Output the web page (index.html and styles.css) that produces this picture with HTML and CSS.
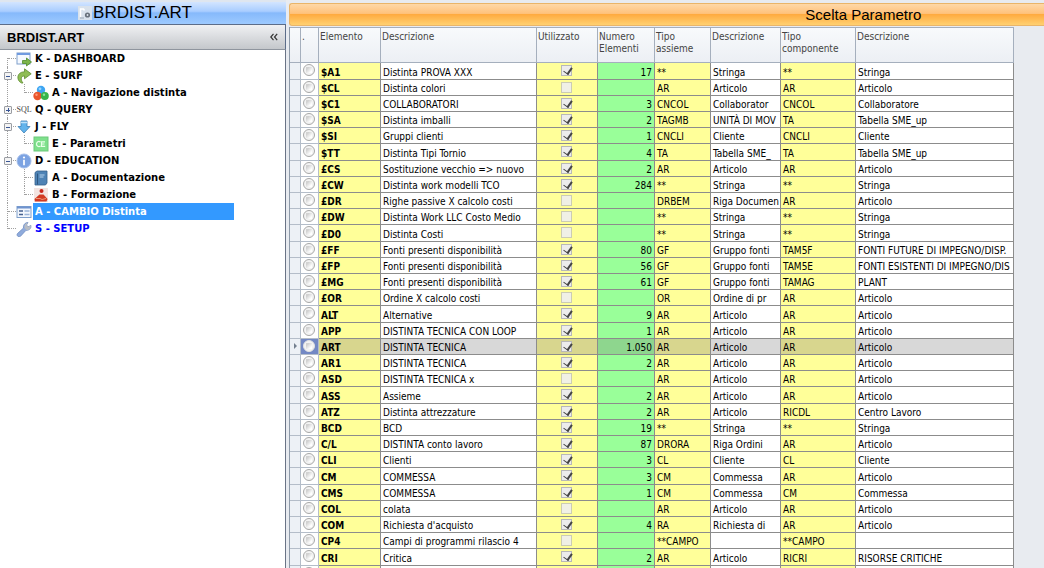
FILE: index.html
```html
<!DOCTYPE html>
<html lang="it">
<head>
<meta charset="utf-8">
<title>BRDIST.ART</title>
<link rel="stylesheet" href="styles.css">
</head>
<body>
<div class="app">
  <aside class="side">
    <h1 class="side-title">
      <svg class="title-icon" viewBox="0 0 14 14" aria-hidden="true"><rect width="14" height="14" fill="#d9e2ec"/><path d="M2.500 11V3h3l1 1.500" fill="none" stroke="#fff" stroke-width="1.500"/><circle cx="9.500" cy="9" r="2.600" fill="#68717c"/><circle cx="9.500" cy="9" r=".9" fill="#dfe6ee"/><path d="M2 12h4" stroke="#9aa6b4"/></svg>
      <span>BRDIST.ART</span>
    </h1>
    <div class="side-bar">
      <h2 class="side-heading">BRDIST.ART</h2>
      <button class="collapse" type="button" aria-label="Comprimi"><svg class="chevrons" viewBox="0 0 8 8" aria-hidden="true"><path d="M3.500 .8L.8 4l2.700 3.200M7.200 .8L4.500 4l2.700 3.200" fill="none" stroke="#333" stroke-width="1.200"/></svg></button>
    </div>
    <nav class="tree">
      <ul class="branch root">
        <li class="node"><div class="row"><span class="slot"></span>
          <svg class="icon" viewBox="0 0 16 16"><rect x="1" y="2" width="13" height="11" fill="#f5f9ff" stroke="#7f9fcb"/><path d="M1 3h13" stroke="#6f9ae0" stroke-width="2"/><path d="M6.500 9.500h4V7l5 4-5 4v-2.500h-4z" fill="#7db54b" stroke="#4f8a2a" stroke-width=".8"/></svg>
          <a class="label" href="#dashboard">K - DASHBOARD</a></div></li>
        <li class="node"><div class="row"><span class="slot"><button class="toggle" type="button" aria-label="Comprimi SURF"></button></span>
          <svg class="icon" viewBox="0 0 16 16"><path d="M5.500 15C0 12.500 .5 3.800 8.500 3.800V.8l6.700 5-6.700 5V8C5 8 4 11 7 15z" fill="#8fbd55" stroke="#5e8d31" stroke-width=".8"/></svg>
          <a class="label" href="#surf">E - SURF</a></div>
          <ul class="branch"><li class="node"><div class="row"><span class="slot"></span>
            <svg class="icon" viewBox="0 0 16 16"><circle cx="8" cy="5" r="4.200" fill="#3da5f2"/><circle cx="4.500" cy="11" r="4.200" fill="#e9562c"/><circle cx="11.800" cy="11" r="4" fill="#35b54a"/><circle cx="7" cy="3.800" r="1.400" fill="#9ad6ff"/><circle cx="3.500" cy="9.800" r="1.200" fill="#ff9a78"/><circle cx="11" cy="9.800" r="1.200" fill="#8be39a"/></svg>
            <a class="label" href="#navigazione">A - Navigazione distinta</a></div></li></ul></li>
        <li class="node"><div class="row"><span class="slot"><button class="toggle closed" type="button" aria-label="Espandi QUERY"></button></span>
          <span class="icon sql"><span>SQL</span></span>
          <a class="label" href="#query">Q - QUERY</a></div></li>
        <li class="node"><div class="row"><span class="slot"><button class="toggle" type="button" aria-label="Comprimi FLY"></button></span>
          <svg class="icon" viewBox="0 0 16 16"><path d="M5 2h6v5.500h3L8 14 2 7.500h3z" fill="#62b4ec" stroke="#3c7fb5" stroke-width=".8"/><path d="M5 3.500h6" stroke="#bfe2fa" stroke-width="1.500"/></svg>
          <a class="label" href="#fly">J - FLY</a></div>
          <ul class="branch"><li class="node"><div class="row"><span class="slot"></span>
            <svg class="icon" viewBox="0 0 16 16"><rect x="1" y="1" width="14" height="14" fill="#7fe08c" stroke="#6cc97a"/><path d="M7.500 6C5.500 4.500 3.500 6 3.500 8s2 3.500 4 2M12 5.800H8.500v4.600H12.200M8.500 8h3" fill="none" stroke="#e9ffe9" stroke-width="1.200"/></svg>
            <a class="label" href="#parametri">E - Parametri</a></div></li></ul></li>
        <li class="node"><div class="row"><span class="slot"><button class="toggle" type="button" aria-label="Comprimi EDUCATION"></button></span>
          <svg class="icon" viewBox="0 0 16 16"><circle cx="8" cy="8" r="7" fill="#7ca3e2" stroke="#a3bdea"/><circle cx="8" cy="4.500" r="1.100" fill="#fff"/><path d="M8 6.800v5.400" stroke="#fff" stroke-width="1.700"/></svg>
          <a class="label" href="#education">D - EDUCATION</a></div>
          <ul class="branch">
            <li class="node"><div class="row"><span class="slot"></span>
            <svg class="icon" viewBox="0 0 16 16"><path d="M2 2.500L4 1h10v12l-1.500 2H2z" fill="#4f83b5" stroke="#355f8c" stroke-width=".8"/><path d="M4.500 3.500v11" stroke="#2e5780"/><path d="M6.500 5h5M6.500 7h4" stroke="#b9d4ec"/></svg>
            <a class="label" href="#documentazione">A - Documentazione</a></div></li>
            <li class="node"><div class="row"><span class="slot"></span>
            <svg class="icon" viewBox="0 0 16 16"><rect x="1" y="1" width="14" height="14" fill="#f3e4e1"/><circle cx="8.500" cy="4" r="2" fill="#c9281d"/><path d="M1.500 12l5-4.500h4l4 4.500-1 2.500H2z" fill="#d23a22"/><path d="M3 11.500h4l2 1 4-1" fill="none" stroke="#f2a888" stroke-width=".8"/></svg>
            <a class="label" href="#formazione">B - Formazione</a></div></li>
          </ul></li>
        <li class="node"><div class="row"><span class="slot"></span>
          <svg class="icon" viewBox="0 0 16 16"><rect x="1" y="2.500" width="14" height="11" fill="#f3f7fd" stroke="#7f9fcb"/><path d="M1 3.500h14" stroke="#6f93cf" stroke-width="2"/><path d="M3 7h4M3 10.500h4" stroke="#45608f" stroke-width="1.500"/><path d="M8.500 7h5M8.500 10.500h5" stroke="#9bb4d8" stroke-width="1.500"/></svg>
          <a class="label selected" href="#cambio" aria-current="page">A - CAMBIO Distinta</a></div></li>
        <li class="node"><div class="row"><span class="slot"></span>
          <svg class="icon" viewBox="0 0 16 16"><path d="M1.500 12.500l6-5.500c-.5-3 1.500-5.500 4.500-5.500L10.500 4 12 5.800 15 4.500c.3 3-2 5.200-5 4.800l-5.500 6c-2 1.500-4.500-1-3-2.800z" fill="#8fabdc" stroke="#6484bb" stroke-width=".7"/><path d="M8.500 7C8 4 9.500 2 12 1.500L10.500 4 12 5.800 15 4.500c0 3-2 5-4.500 4.500z" fill="#b9bdc4"/></svg>
          <a class="label link" href="#setup">S - SETUP</a></div></li>
      </ul>
    </nav>
  </aside>
  <main class="content">
    <h2 class="content-title">Scelta Parametro</h2>
    <table class="grid">
      <colgroup><col class="c-mark"><col class="c-pick"><col class="c-elem"><col class="c-desc"><col class="c-used"><col class="c-num"><col class="c-type"><col class="c-tdesc"><col class="c-comp"><col class="c-cdesc"></colgroup>
      <thead><tr><th></th><th>.</th><th>Elemento</th><th>Descrizione</th><th>Utilizzato</th><th>Numero Elementi</th><th>Tipo assieme</th><th>Descrizione</th><th>Tipo componente</th><th>Descrizione</th></tr></thead>
      <tbody id="rows"></tbody>
    </table>
  </main>
</div>
<script src="grid.js"></script>
</body>
</html>
```

FILE: styles.css
```css
* { box-sizing: border-box; }

body {
  margin: 0;
  background: #e8ebf0;
  color: #000;
  font-family: "DejaVu Sans Condensed", "DejaVu Sans", sans-serif;
  font-size: 10px;
}

h1, h2, ul { margin: 0; padding: 0; }
button { padding: 0; border: 0; background: none; font: inherit; color: inherit; }

.app { display: flex; gap: 3px; height: 100vh; overflow: hidden; }

/* Left panel */
.side {
  flex: 0 0 286px;
  display: flex;
  flex-direction: column;
  background: #fff;
}
.side-title {
  display: flex;
  align-items: center;
  justify-content: center;
  gap: 1px;
  height: 24px;
  padding-right: 16px;
  border-top: 2px solid #dfe6ef;
  background: linear-gradient(#d3e5ff 0%, #a9cdff 42%, #86b9fb 50%, #9dcaff 100%);
  font: 17px "Liberation Sans", Arial, sans-serif;
}
.title-icon { width: 14px; height: 14px; }
.side-bar {
  display: flex;
  align-items: center;
  justify-content: space-between;
  height: 26px;
  padding: 0 7px;
  border-top: 1px solid #5c6d89;
  border-right: 1px solid #5c6d89;
  border-bottom: 1px solid #8f959e;
  background: linear-gradient(#f0f1f3, #c4c7cb);
}
.side-heading { font: bold 13px "Liberation Sans", Arial, sans-serif; }
.collapse { display: flex; }
.chevrons { width: 8px; height: 8px; }

/* Tree */
.tree { flex: 1; border-right: 1px solid #6a7486; font-family: "DejaVu Sans", Verdana, sans-serif; font-weight: bold; }
.branch { list-style: none; margin-left: 17px; }
.root { margin-left: 0; }
.node { position: relative; }
.node::before {
  content: "";
  position: absolute;
  left: 7px;
  top: 0;
  bottom: 0;
  border-left: 1px dotted #a0a0a0;
}
.root > .node:first-child::before { top: 8px; }
.node:last-child::before { bottom: auto; height: 9px; }
.row { display: flex; height: 17px; align-items: center; }
.slot {
  position: relative;
  flex: 0 0 16px;
  height: 17px;
  padding: 5px 0 0 4px;
}
.slot::before {
  content: "";
  position: absolute;
  left: 8px;
  right: 0;
  top: 8px;
  border-top: 1px dotted #a0a0a0;
}
.toggle {
  position: relative;
  display: block;
  width: 8px;
  height: 8px;
  border: 1px solid #9a9da3;
  border-radius: 1px;
  background: linear-gradient(#3a5695, #3a5695) center / 4px 1px no-repeat, #f4f4f4;
}
.toggle.closed {
  background: linear-gradient(#3a5695, #3a5695) center / 4px 1px no-repeat, linear-gradient(#3a5695, #3a5695) center / 1px 4px no-repeat, #f4f4f4;
}
.icon { flex: 0 0 16px; width: 16px; height: 16px; }
.sql { display: flex; align-items: center; justify-content: center; color: #444; font: 8px "Liberation Serif", serif; }
.label {
  margin-left: 1px;
  padding-left: 2px;
  color: #000;
  line-height: 17px;
  text-decoration: none;
  white-space: nowrap;
}
.selected { width: 201px; background: #3399ff; color: #fff; }
.link { color: #00f; }

/* Right panel */
.content { flex: 1; min-width: 0; padding-top: 3px; background: #e8ebf0; }
.content-title {
  padding-left: 52%;
  border: 1px solid #e9b56a;
  border-right: 0;
  border-radius: 3px 0 0 3px;
  background: linear-gradient(#fed8a8 0%, #ffc27c 45%, #ffab40 50%, #ffd071 100%);
  font: 15px/21px "Liberation Sans", Arial, sans-serif;
  text-align: center;
}

.grid {
  width: 724px;
  margin-top: 1px;
  border-left: 1px solid #8d99a8;
  border-collapse: separate;
  border-spacing: 0;
  table-layout: fixed;
}
.c-mark { width: 11px; }
.c-pick { width: 18px; }
.c-elem { width: 62px; }
.c-desc { width: 156px; }
.c-used { width: 61px; }
.c-num { width: 57px; }
.c-type { width: 56px; }
.c-tdesc { width: 70px; }
.c-comp { width: 75px; }
.c-cdesc { width: 158px; }

.grid th {
  height: 36px;
  padding: 3px 0 0 1px;
  border-top: 1px solid #a5afbd;
  border-right: 1px solid #a5afbd;
  border-bottom: 1px solid #a5afbd;
  background: linear-gradient(#f8fafc, #eceff4);
  color: #444;
  font-weight: normal;
  line-height: 12px;
  text-align: left;
  vertical-align: top;
}
.grid td {
  height: 16px;
  padding: 2px 0 0 2px;
  border-right: 1px solid #8c8c8c;
  border-bottom: 1px solid #8c8c8c;
  background: #fff;
  line-height: 13px;
  overflow: hidden;
  vertical-align: top;
  white-space: nowrap;
}
.grid tr:nth-child(5n+1) td { height: 17px; padding-top: 3px; }
.grid .mark { border-color: #b4bdc9; background: #edf1f6; }
.grid .mark, .grid tr:nth-child(5n+1) .mark { padding: 4px 0 0; }
.grid .pick { border-color: #b4bdc9; }
.grid .pick, .grid tr:nth-child(5n+1) .pick { padding: 1px 0 0 2px; }
.grid .key { background: #ffff99; }
.grid .elem { font-weight: bold; }
.grid .used, .grid tr:nth-child(5n+1) .used { padding: 2px 0 0 24px; }
.grid .num { padding-right: 2px; background: #99ff99; text-align: right; }
.grid .current td { background: #d8d8d8; }
.grid .current .key { background: #d8d68e; }
.grid .current .num { background: #8ed68e; }
.grid .current .mark { background: #edf1f6; }
.grid .current .pick { background: #7388c4; }
.arrow { display: block; width: 3px; margin-left: 4px; border: 3px solid transparent; border-left-color: #74808f; border-right: 0; }

.radio, .check { display: block; appearance: none; margin: 0; }
.radio {
  width: 12px;
  height: 12px;
  border: 1px solid #a8a8a8;
  border-radius: 50%;
  background: linear-gradient(135deg, #d2d2d2 25%, #fff 80%) center / 6px 6px no-repeat, #f3f3f3;
}
.current .radio { border-color: #e1e1e1; }
.check {
  width: 11px;
  height: 11px;
  border: 1px solid #b8b8b8;
  background: #ececec;
}
.check:not(:checked) { border-color: #ccccb4; background: #f0f0e6; }
.check:checked::after {
  content: "";
  display: block;
  width: 4px;
  height: 7px;
  margin-left: 3px;
  border: solid #444;
  border-width: 0 2px 1px 0;
  transform: rotate(35deg);
}
```

FILE: grid.js
```js
// element | description | used | count | type | type description | component | component description
const data = `$A1|Distinta PROVA XXX|1|17|**|Stringa|**|Stringa
$CL|Distinta colori|0||AR|Articolo|AR|Articolo
$C1|COLLABORATORI|1|3|CNCOL|Collaborator|CNCOL|Collaboratore
$SA|Distinta imballi|1|2|TAGMB|UNITÀ DI MOV|TA|Tabella SME_up
$SI|Gruppi clienti|1|1|CNCLI|Cliente|CNCLI|Cliente
$TT|Distinta Tipi Tornio|1|4|TA|Tabella SME_|TA|Tabella SME_up
£CS|Sostituzione vecchio => nuovo|1|2|AR|Articolo|AR|Articolo
£CW|Distinta work modelli TCO|1|284|**|Stringa|**|Stringa
£DR|Righe passive X calcolo costi|0||DRBEM|Riga Documen|AR|Articolo
£DW|Distinta Work LLC Costo Medio|0||**|Stringa|**|Stringa
£D0|Distinta Costi|0||**|Stringa|**|Stringa
£FF|Fonti presenti disponibilità|1|80|GF|Gruppo fonti|TAM5F|FONTI FUTURE DI IMPEGNO/DISP.
£FP|Fonti presenti disponibilità|1|56|GF|Gruppo fonti|TAM5E|FONTI ESISTENTI DI IMPEGNO/DIS
£MG|Fonti presenti disponibilità|1|61|GF|Gruppo fonti|TAMAG|PLANT
£OR|Ordine X calcolo costi|0||OR|Ordine di pr|AR|Articolo
ALT|Alternative|1|9|AR|Articolo|AR|Articolo
APP|DISTINTA TECNICA CON LOOP|1|1|AR|Articolo|AR|Articolo
ART|DISTINTA TECNICA|1|1.050|AR|Articolo|AR|Articolo
AR1|DISTINTA TECNICA|1|2|AR|Articolo|AR|Articolo
ASD|DISTINTA TECNICA x|0||AR|Articolo|AR|Articolo
ASS|Assieme|1|2|AR|Articolo|AR|Articolo
ATZ|Distinta attrezzature|1|2|AR|Articolo|RICDL|Centro Lavoro
BCD|BCD|1|19|**|Stringa|**|Stringa
C/L|DISTINTA conto lavoro|1|87|DRORA|Riga Ordini|AR|Articolo
CLI|Clienti|1|3|CL|Cliente|CL|Cliente
CM|COMMESSA|1|3|CM|Commessa|AR|Articolo
CMS|COMMESSA|1|1|CM|Commessa|CM|Commessa
COL|colata|0||AR|Articolo|AR|Articolo
COM|Richiesta d'acquisto|1|4|RA|Richiesta di|AR|Articolo
CP4|Campi di programmi rilascio 4|0||**CAMPO||**CAMPO|
CRI|Critica|1|2|AR|Articolo|RICRI|RISORSE CRITICHE
|||||||`;

document.getElementById("rows").innerHTML = data.split("\n").map((line) => {
  const [elem, desc, used, count, type, typeDesc, comp, compDesc] = line.split("|");
  const current = elem === "ART";
  const name = elem || "riga successiva";
  return `<tr class="${current ? "current" : ""}">
    <td class="mark">${current ? '<span class="arrow"></span>' : ""}</td>
    <td class="pick"><input class="radio" type="radio" name="elemento" aria-label="Seleziona ${name}"></td>
    <td class="key elem">${elem}</td><td>${desc}</td>
    <td class="key used"><input class="check" type="checkbox" aria-label="Utilizzato ${name}" ${used === "1" ? "checked" : ""}></td>
    <td class="num">${count}</td>
    <td class="key">${type}</td><td>${typeDesc}</td>
    <td class="key">${comp}</td><td>${compDesc}</td></tr>`;
}).join("");
```
